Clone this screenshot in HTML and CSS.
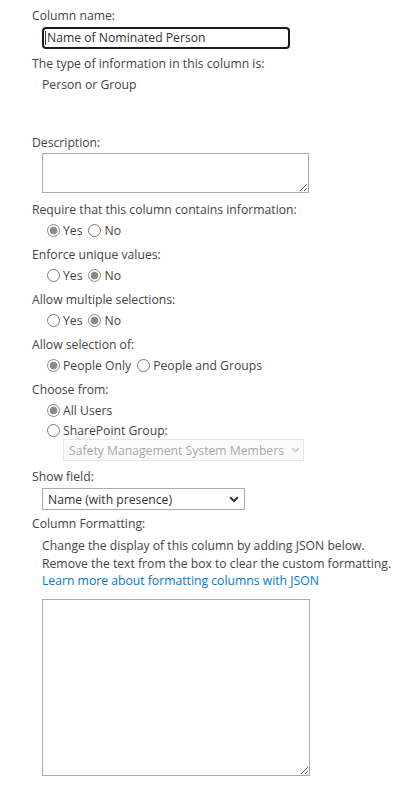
FILE: index.html
```html
<!DOCTYPE html>
<html>
<head>
<meta charset="utf-8">
<link rel="stylesheet" href="styles.css">
</head>
<body>
<div class="form">
  <div class="label">Column name:</div>
  <div class="indent">
    <div class="textbox"><span class="caret"></span>Name of Nominated Person</div>
  </div>
  <div class="label gap-type">The type of information in this column is:</div>
  <div class="indent line">Person or Group</div>

  <div class="label gap-desc">Description:</div>
  <div class="indent"><textarea class="desc"></textarea></div>

  <div class="label gap-q">Require that this column contains information:</div>
  <div class="radios">
    <label class="opt"><span class="radio on"></span>Yes</label>
    <label class="opt"><span class="radio"></span>No</label>
  </div>

  <div class="label">Enforce unique values:</div>
  <div class="radios">
    <label class="opt"><span class="radio"></span>Yes</label>
    <label class="opt"><span class="radio on"></span>No</label>
  </div>

  <div class="label">Allow multiple selections:</div>
  <div class="radios">
    <label class="opt"><span class="radio"></span>Yes</label>
    <label class="opt"><span class="radio on"></span>No</label>
  </div>

  <div class="label">Allow selection of:</div>
  <div class="radios">
    <label class="opt"><span class="radio on"></span>People Only</label>
    <label class="opt"><span class="radio"></span>People and Groups</label>
  </div>

  <div class="label">Choose from:</div>
  <div class="radios stack">
    <label class="opt"><span class="radio on"></span>All Users</label>
    <label class="opt"><span class="radio"></span>SharePoint Group:</label>
  </div>
  <div class="group-select">
    <div class="select disabled">
      <span>Safety Management System Members</span>
      <svg class="chev" width="9" height="6" viewBox="0 0 9 6"><path d="M1 1 L4.5 4.5 L8 1" fill="none" stroke="#c8c8c8" stroke-width="1.6"/></svg>
    </div>
  </div>

  <div class="label gap-show">Show field:</div>
  <div class="indent">
    <div class="select show">
      <span>Name (with presence)</span>
      <svg class="chev" width="10" height="7" viewBox="0 0 10 7"><path d="M1.2 1.3 L5 5 L8.8 1.3" fill="none" stroke="#333" stroke-width="2"/></svg>
    </div>
  </div>

  <div class="label gap-fmt">Column Formatting:</div>
  <div class="indent help">
    <div class="line">Change the display of this column by adding JSON below.</div>
    <div class="line">Remove the text from the box to clear the custom formatting.</div>
    <a class="line link" href="#">Learn more about formatting columns with JSON</a>
  </div>
  <div class="indent"><textarea class="json"></textarea></div>
</div>
</body>
</html>
```
FILE: styles.css
```css
html, body {
  margin: 0;
  padding: 0;
  background: #fff;
}
body {
  font-family: "Open Sans", "Noto Sans", sans-serif;
  font-size: 12.2px;
  color: #444;
}
.form {
  padding: 7px 0 0 32px;
}
.label {
  line-height: 18px;
  height: 18px;
  white-space: nowrap;
}
.line {
  display: block;
  line-height: 18px;
  height: 18px;
  white-space: nowrap;
}
.indent {
  padding-left: 10px;
}
.textbox {
  box-sizing: border-box;
  width: 248px;
  height: 22px;
  margin-top: 2px;
  border: 2px solid #1a1a1a;
  border-radius: 4px;
  line-height: 18px;
  padding-left: 1px;
  color: #333;
  display: flex;
  align-items: center;
}
.caret {
  display: inline-block;
  width: 1px;
  height: 14px;
  background: #333;
  margin-right: 1px;
}
.gap-type {
  margin-top: 6px;
}
.indent.line {
  margin-top: 3px;
}
.gap-desc {
  margin-top: 40px;
}
textarea {
  display: block;
  box-sizing: border-box;
  border: 1px solid #ababab;
  border-radius: 0;
  margin: 0;
  padding: 2px;
  font: inherit;
  background: #fff;
  outline: none;
}
.desc {
  width: 267px;
  height: 40px;
  margin-top: 1px;
}
.gap-q {
  margin-top: 8px;
}
.radios {
  display: flex;
  gap: 6px;
  padding-left: 15px;
  margin: 2px 0 6px;
  height: 19px;
}
.radios.stack {
  flex-direction: column;
  gap: 1px;
  height: auto;
  margin-bottom: 0;
}
.opt {
  display: flex;
  align-items: center;
  height: 19px;
  line-height: 19px;
}
.radio {
  box-sizing: border-box;
  width: 13px;
  height: 13px;
  border: 1px solid #7a7a7a;
  border-radius: 50%;
  margin-right: 3px;
  background: #fff;
  flex: none;
}
.radio.on {
  border-color: #8a8a8a;
  background: radial-gradient(circle, #8a8a8a 0 3.4px, #fff 4.2px);
}
.group-select {
  padding-left: 31px;
  margin-top: -1px;
}
.select {
  box-sizing: border-box;
  height: 22px;
  display: flex;
  align-items: center;
  justify-content: space-between;
  padding: 0 6px 0 5px;
  white-space: nowrap;
}
.select.disabled {
  width: 241px;
  border: 1px solid #e6e6e6;
  background: #fbfbfb;
  color: #a8a8a8;
  padding-right: 3px;
}
.select.show {
  width: 203px;
  border: 1px solid #ababab;
  color: #333;
  padding-right: 5px;
}
.chev {
  display: block;
  flex: none;
}
.gap-show {
  margin-top: 7px;
}
.gap-show + .indent {
  margin-top: 2px;
}
.gap-fmt {
  margin-top: 5px;
}
.help {
  margin-top: 4px;
}
.help .line {
  height: 17.5px;
  line-height: 17.5px;
}
.link {
  color: #0078d4;
  text-decoration: none;
}
.json {
  width: 268px;
  height: 177px;
  margin-top: 9px;
}
```
